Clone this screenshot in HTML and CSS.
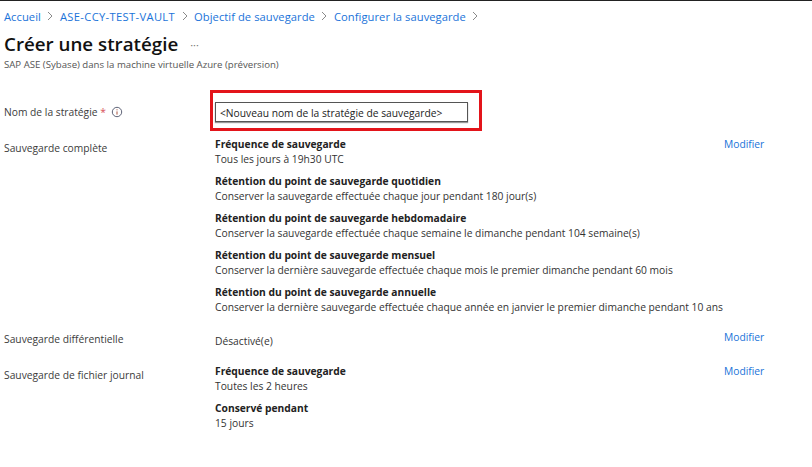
FILE: index.html
```html
<!DOCTYPE html>
<html lang="fr">
<head>
<meta charset="utf-8">
<title>Créer une stratégie</title>
<link rel="stylesheet" href="styles.css">
</head>
<body>
<nav class="crumbs">
  <a>Accueil</a><svg class="chev" viewBox="0 0 8 10"><path d="M2 1l4 4-4 4"/></svg>
  <a class="vault">ASE-CCY-TEST-VAULT</a><svg class="chev" viewBox="0 0 8 10"><path d="M2 1l4 4-4 4"/></svg>
  <a>Objectif de sauvegarde</a><svg class="chev" viewBox="0 0 8 10"><path d="M2 1l4 4-4 4"/></svg>
  <a>Configurer la sauvegarde</a><svg class="chev" viewBox="0 0 8 10"><path d="M2 1l4 4-4 4"/></svg>
</nav>
<header class="head">
  <h1>Créer une stratégie</h1><span class="more">···</span>
</header>
<p class="sub">SAP ASE (Sybase) dans la machine virtuelle Azure (préversion)</p>
<section class="name-row">
  <div class="label name-label">Nom de la stratégie <span class="req">*</span>
    <svg class="info" viewBox="0 0 12 12"><circle cx="6" cy="6" r="4.7"/><path class="info-i" d="M6 5.4v3.2M6 3.3v1"/></svg>
  </div>
  <div class="highlight"><div class="input">&lt;Nouveau nom de la stratégie de sauvegarde&gt;</div></div>
</section>
<section class="row full">
  <div class="label offset">Sauvegarde complète</div>
  <div class="body">
    <div class="item"><b>Fréquence de sauvegarde</b><span>Tous les jours à 19h30 UTC</span></div>
    <div class="item"><b>Rétention du point de sauvegarde quotidien</b><span>Conserver la sauvegarde effectuée chaque jour pendant 180 jour(s)</span></div>
    <div class="item"><b>Rétention du point de sauvegarde hebdomadaire</b><span>Conserver la sauvegarde effectuée chaque semaine le dimanche pendant 104 semaine(s)</span></div>
    <div class="item"><b>Rétention du point de sauvegarde mensuel</b><span>Conserver la dernière sauvegarde effectuée chaque mois le premier dimanche pendant 60 mois</span></div>
    <div class="item"><b>Rétention du point de sauvegarde annuelle</b><span>Conserver la dernière sauvegarde effectuée chaque année en janvier le premier dimanche pendant 10 ans</span></div>
  </div>
  <a class="edit">Modifier</a>
</section>
<section class="row diff">
  <div class="label">Sauvegarde différentielle</div>
  <div class="body off"><span>Désactivé(e)</span></div>
  <a class="edit">Modifier</a>
</section>
<section class="row log">
  <div class="label offset">Sauvegarde de fichier journal</div>
  <div class="body">
    <div class="item"><b>Fréquence de sauvegarde</b><span>Toutes les 2 heures</span></div>
    <div class="item"><b>Conservé pendant</b><span>15 jours</span></div>
  </div>
  <a class="edit">Modifier</a>
</section>
</body>
</html>
```
FILE: styles.css
```css
* { box-sizing: border-box; }
html, body { height: 100%; }
body {
  margin: 0;
  border-top: 1px solid #222;
  background: #fff;
  color: #292929;
  font: 10.27px/15px "Open Sans", "Noto Sans", sans-serif;
  overflow: hidden;
}
.crumbs {
  display: flex;
  align-items: center;
  height: 14px;
  margin: 8px 0 0 4px;
  font-size: 11.2px;
  letter-spacing: 0.05px;
  color: #1a73d9;
}
.vault { letter-spacing: 0.33px; }
.chev { width: 8px; height: 10px; margin: 0 5.5px; fill: none; stroke: #8a8a8a; stroke-width: 1; }
.head { display: flex; align-items: center; height: 26px; margin: 8px 0 0 4px; }
h1 { margin: 0; font-size: 18.75px; line-height: 26px; font-weight: 600; color: #111; }
.more { margin-left: 12px; font-size: 11px; color: #777; }
.sub { margin: 1px 0 0 4px; font-size: 9.64px; line-height: 13px; color: #555; }
.name-row { display: flex; align-items: center; margin: 19px 0 0 4px; }
.label { width: 206px; flex: none; color: #3b3b3b; }
.name-label { padding-top: 3px; }
.req { color: #d8505a; }
.info { width: 12px; height: 12px; margin-left: 2px; vertical-align: -2px; fill: none; stroke: #5f6478; stroke-width: 1; }
.info-i { stroke: #a8503c; }
.highlight { width: 272px; height: 41px; border: 3px solid #e3141a; padding: 9px 11px 0 2px; }
.input { height: 20px; border: 1px solid #555; box-shadow: 0 1px 1px #999; padding: 1px 0 0 4px; line-height: 18px; color: #222; }
.row { display: flex; margin-left: 4px; }
.row .body { width: 510px; flex: none; margin-left: 5px; }
.offset { padding-top: 4px; }
.full { margin-top: 6px; }
.diff { margin-top: 10px; }
.log { margin-top: 15px; }
.off { padding-top: 2px; }
.item { margin-bottom: 7px; }
.item b, .item span { display: block; }
.item b { font-weight: 700; color: #222; }
.body span { color: #333; }
.edit { color: #1a73d9; margin-left: -1px; }
.diff .edit { margin-top: -2px; }
```
